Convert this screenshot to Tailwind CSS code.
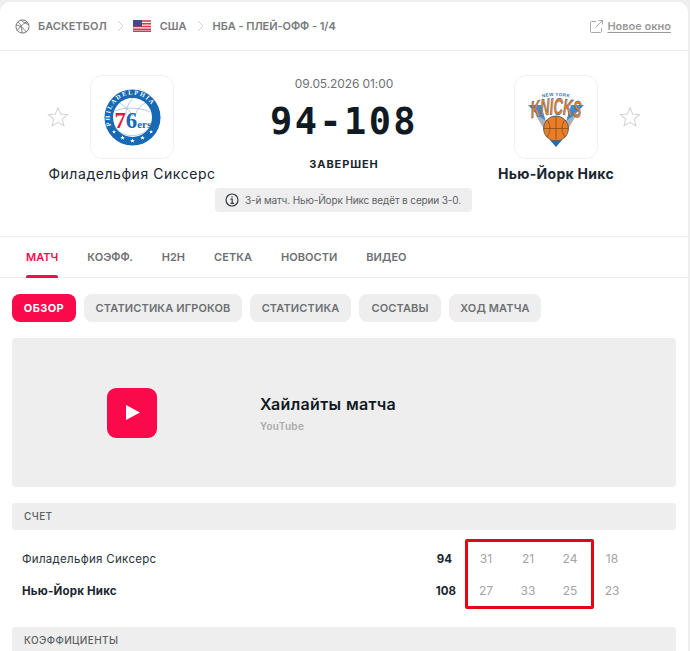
<!DOCTYPE html>
<html lang="ru">
<head>
  <meta charset="UTF-8" />
  <meta name="viewport" content="width=device-width, initial-scale=1.0" />
  <title>Филадельфия Сиксерс - Нью-Йорк Никс</title>
  <script src="https://cdn.jsdelivr.net/npm/@tailwindcss/browser@4"></script>
</head>
<body class="bg-[#eeeeee] font-['Inter','Noto_Sans',sans-serif] h-[651px] overflow-hidden">
  <div class="mt-[2px] mr-[2px] h-[649px] overflow-hidden rounded-t-[10px] bg-white">

    <!-- breadcrumbs -->
    <div class="flex h-[49px] items-center justify-between border-b border-[#ebebeb] pl-[15px] pr-[17px]">
      <div class="flex items-center text-[11px] font-semibold text-[#777a7d]">
        <svg class="h-[15px] w-[15px] shrink-0" viewBox="0 0 16 16" fill="none" stroke="#6f7275" stroke-width="1">
          <circle cx="8" cy="8" r="7" />
          <path d="M3 3c2.800 2.300 4.200 4.600 4.500 12M13 3C9.500 4 6 8 2 12.500M1.300 6.500c3 .3 8 3 10.700 7.500M6.500 1.200c2 2 5.500 4 8.300 4.800" />
        </svg>
        <span class="ml-[8px] tracking-[0.05px]">БАСКЕТБОЛ</span>
        <svg class="ml-[10px] h-[12px] w-[7px]" viewBox="0 0 7 12" fill="none" stroke="#d4d4d4" stroke-width="1"><path d="M1 1l5 5-5 5" /></svg>
        <svg class="ml-[9px] h-[12px] w-[18px]" viewBox="0 0 18 12">
          <rect width="18" height="12" fill="#f1f1f4" />
          <path d="M0 1h18M0 3.800h18M0 6.500h18M0 9.200h18M0 11.300h18" stroke="#d6394a" stroke-width="1.400" />
          <rect width="9" height="6.500" fill="#3d4d8c" />
        </svg>
        <span class="ml-[9px]">США</span>
        <svg class="ml-[10px] h-[12px] w-[7px]" viewBox="0 0 7 12" fill="none" stroke="#d4d4d4" stroke-width="1"><path d="M1 1l5 5-5 5" /></svg>
        <span class="ml-[9px] tracking-[-0.05px]">НБА - ПЛЕЙ-ОФФ - 1/4</span>
      </div>
      <div class="flex items-center text-[11px] font-semibold text-[#9a9a9a]">
        <svg class="h-[13px] w-[13px]" viewBox="0 0 13 13" fill="none" stroke="#a8a8a8" stroke-width="1">
          <path d="M6 1.500H1.500a1 1 0 0 0-1 1v9a1 1 0 0 0 1 1h9a1 1 0 0 0 1-1V8M5.500 7.500l7-7M8.500.5h4v4" />
        </svg>
        <span class="ml-[4px] underline underline-offset-2">Новое окно</span>
      </div>
    </div>

    <!-- match header -->
    <div class="flex h-[186px] border-b border-[#ebebeb] pt-[24px]">
      <div class="flex w-[264px] flex-col items-center">
        <div class="relative flex h-[84px] w-[84px] items-center justify-center rounded-[12px] border border-[#f0f0f0]">
          <svg class="absolute left-[-44px] top-[30px] h-[22px] w-[22px]" viewBox="0 0 22 22" fill="none" stroke="#d3d3d3" stroke-width="1.100"><path d="M11 1.800l2.700 6.300 6.800.6-5.200 4.500 1.600 6.700-5.900-3.600-5.900 3.600 1.600-6.700-5.200-4.500 6.800-.6z" /></svg>
          <svg class="h-[57px] w-[57px]" viewBox="0 0 60 60">
            <circle cx="30" cy="30" r="29.500" fill="#1669b5" />
            <circle cx="30" cy="30" r="20.500" fill="#ffffff" />
            <path d="M12 23c9-4 25-4 36 1M30 10c-5 6-7 12-7 18M17 15c6 4 11 9 14 14M43 15c-6 3-9 8-10 13" fill="none" stroke="#9fb9d6" stroke-width="0.800" />
            <path d="M12 40c-1 0 5 9 18 9s18-9 18-9" fill="none" stroke="#9fb9d6" stroke-width="0.800" />
            <path id="ring76" d="M8 39.500A24 24 0 1 1 52 39.500" fill="none" />
            <text font-family="'Liberation Serif',serif" font-size="6.600" font-weight="700" fill="#ffffff" letter-spacing="1.700"><textPath href="#ring76" startOffset="1">PHILADELPHIA</textPath></text>
            <path d="M30 52l.7 1.700h1.800l-1.400 1.100.5 1.800-1.600-1-1.600 1 .5-1.800-1.400-1.100h1.800zM19.500 49l.7 1.600h1.700l-1.300 1.100.5 1.700-1.600-1-1.500 1 .5-1.700-1.300-1.100h1.700zM40.500 49l.7 1.600h1.700l-1.300 1.100.5 1.700-1.600-1-1.500 1 .5-1.700-1.300-1.100h1.700zM10.500 43l.6 1.400h1.500l-1.200 1 .5 1.500-1.400-.9-1.300.9.400-1.500-1.100-1h1.500zM49.500 43l.6 1.400h1.500l-1.200 1 .5 1.500-1.400-.9-1.300.9.400-1.500-1.100-1h1.500z" fill="#ffffff" />
            <text x="11" y="41" font-family="'Liberation Serif',serif" font-size="24" font-weight="700"><tspan fill="#e01a3c">7</tspan><tspan fill="#1669b5">6</tspan><tspan fill="#1669b5" font-size="11.500">ers</tspan></text>
          </svg>
        </div>
        <div class="mt-[6px] whitespace-nowrap text-[14px] leading-[18px] tracking-[0.55px] text-[#1a2530]">Филадельфия Сиксерс</div>
      </div>

      <div class="flex w-[160px] flex-col items-center pt-[1px]">
        <div class="whitespace-nowrap text-[12px] leading-[15px] tracking-[-0.1px] text-[#6e7174]">09.05.2026 01:00</div>
        <div class="mt-[9px] whitespace-nowrap font-['DejaVu_Sans_Mono',monospace] text-[37px] leading-[44px] font-bold tracking-[2.400px] text-[#0f1a24]">94-108</div>
        <div class="mt-[13px] whitespace-nowrap text-[11px] leading-[14px] font-bold tracking-[0.9px] text-[#1a2530]">ЗАВЕРШЕН</div>
        <div class="ml-[-1px] mt-[17px] flex h-[24px] w-[257px] shrink-0 items-center rounded-[4px] bg-[#eeeeee] pl-[10px] text-[10px] tracking-[-0.13px] text-[#5d6063]">
          <svg class="h-[14px] w-[14px] shrink-0" viewBox="0 0 14 14" fill="none" stroke="#33383d" stroke-width="1.200"><circle cx="7" cy="7" r="6" /><path d="M5.500 6.200H7.200V10.300M5.500 10.300H9M7 3.300v1.300" /></svg>
          <span class="ml-[6px] whitespace-nowrap">3-й матч. Нью-Йорк Никс ведёт в серии 3-0.</span>
        </div>
      </div>

      <div class="flex w-[264px] flex-col items-center">
        <div class="relative flex h-[84px] w-[84px] items-center justify-center rounded-[12px] border border-[#f0f0f0]">
          <svg class="h-[60px] w-[60px]" viewBox="0 0 60 60">
            <path id="arcNy" d="M8 13Q30 5 52 13" fill="none" />
            <text font-family="'Liberation Sans',sans-serif" font-size="4.600" font-weight="700" fill="#2b78b8" letter-spacing="0.300" text-anchor="middle"><textPath href="#arcNy" startOffset="50%">NEW YORK</textPath></text>
            <path d="M2 18H15L21 38zM58 18H45L39 38z" fill="#3f8fd0" />
            <path d="M9 27l10 17 8-6zM51 27l-10 17-8-6z" fill="#a9b0b6" />
            <path d="M24 53h12l-6 7z" fill="#1d6bb0" />
            <g transform="translate(30 32) scale(1 1.800)">
              <path id="arcKnicks" d="M-32 1Q0 -6 32 1" fill="none" />
              <text font-family="'Liberation Sans',sans-serif" font-size="13" font-weight="700" font-style="italic" fill="#e87f28" stroke="#1d5d9b" stroke-width="0.300" text-anchor="middle"><textPath href="#arcKnicks" startOffset="50%">KNICKS</textPath></text>
            </g>
            <circle cx="30" cy="41.500" r="12.500" fill="#e87f28" stroke="#5a6269" stroke-width="1" />
            <path d="M17.500 41.500h25M30 29v25M21 33c4 5 4 12 0 17M39 33c-4 5-4 12 0 17" fill="none" stroke="#8a4a18" stroke-width="0.800" />
          </svg>
          <svg class="absolute right-[-44px] top-[30px] h-[22px] w-[22px]" viewBox="0 0 22 22" fill="none" stroke="#d3d3d3" stroke-width="1.100"><path d="M11 1.800l2.700 6.300 6.800.6-5.200 4.500 1.600 6.700-5.900-3.600-5.900 3.600 1.600-6.700-5.200-4.500 6.800-.6z" /></svg>
        </div>
        <div class="mt-[6px] whitespace-nowrap text-[14px] leading-[18px] font-bold tracking-[0.3px] text-[#1a2530]">Нью-Йорк Никс</div>
      </div>
    </div>

    <!-- tabs -->
    <div class="flex h-[41px] items-center gap-[29px] border-b border-[#ebebeb] pl-[26px] text-[11px] font-semibold tracking-[0.03px] text-[#6d7073]">
      <span class="relative flex h-full items-center text-[#fa0a4b]">МАТЧ<span class="absolute bottom-[-1px] left-0 right-0 h-[3px] rounded-t-[2px] bg-[#fa0a4b]"></span></span>
      <span>КОЭФФ.</span>
      <span>H2H</span>
      <span>СЕТКА</span>
      <span>НОВОСТИ</span>
      <span>ВИДЕО</span>
    </div>

    <div class="relative px-[12px] pt-[16px]">
      <!-- sub tabs -->
      <div class="flex gap-[8px] text-[11px] font-semibold tracking-[0.12px] text-[#6d7073]">
        <span class="flex h-[28px] w-[64px] items-center justify-center rounded-[8px] bg-[#fa0a4b] font-bold tracking-[0.4px] text-white">ОБЗОР</span>
        <span class="flex h-[28px] w-[158px] items-center justify-center rounded-[8px] bg-[#eeeeee]">СТАТИСТИКА ИГРОКОВ</span>
        <span class="flex h-[28px] w-[101px] items-center justify-center rounded-[8px] bg-[#eeeeee]">СТАТИСТИКА</span>
        <span class="flex h-[28px] w-[82px] items-center justify-center rounded-[8px] bg-[#eeeeee]">СОСТАВЫ</span>
        <span class="flex h-[28px] w-[92px] items-center justify-center rounded-[8px] bg-[#eeeeee]">ХОД МАТЧА</span>
      </div>

      <!-- video -->
      <div class="mt-[16px] flex h-[149px] items-center rounded-[4px] bg-[#eeeeee] pl-[95px]">
        <div class="flex h-[50px] w-[50px] items-center justify-center rounded-[9px] bg-[#fa0a4b]">
          <svg class="ml-[1px] h-[15px] w-[14px]" viewBox="0 0 14 15"><path d="M0 0l14 7.500L0 15z" fill="#ffffff" /></svg>
        </div>
        <div class="ml-[103px] mt-[2px]">
          <div class="text-[16px] leading-[20px] font-semibold tracking-[0.35px] text-[#0f1a24]">Хайлайты матча</div>
          <div class="mt-[5px] text-[10px] leading-[14px] font-semibold tracking-[0.3px] text-[#aaaaaa]">YouTube</div>
        </div>
      </div>

      <!-- score -->
      <div class="mt-[16px] flex h-[27px] w-[664px] items-center rounded-[3px] bg-[#eeeeee] pl-[12px] text-[10px] font-medium tracking-[0.4px] text-[#5d6063]">СЧЕТ</div>
      <div class="mt-[13px] w-[664px] leading-[16px]">
        <div class="flex h-[32px] items-center">
          <span class="ml-[10px] w-[399px] text-[11.500px] tracking-[0.3px] text-[#2a333b]">Филадельфия Сиксерс</span>
          <span class="w-[31px] text-right text-[11.500px] font-bold text-[#1a2530]">94</span>
          <span class="ml-[13px] flex text-[12px] text-[#a3a3a3]">
            <span class="w-[42px] text-center">31</span><span class="w-[42px] text-center">21</span><span class="w-[42px] text-center">24</span><span class="w-[42px] text-center">18</span>
          </span>
        </div>
        <div class="flex h-[32px] items-center">
          <span class="ml-[10px] w-[399px] text-[11.500px] font-bold tracking-[0.2px] text-[#1a2530]">Нью-Йорк Никс</span>
          <span class="w-[35px] text-right text-[11.500px] font-bold text-[#1a2530]">108</span>
          <span class="ml-[9px] flex text-[12px] text-[#a3a3a3]">
            <span class="w-[42px] text-center">27</span><span class="w-[42px] text-center">33</span><span class="w-[42px] text-center">25</span><span class="w-[42px] text-center">23</span>
          </span>
        </div>
      </div>
      <div class="mt-[20px] flex h-[27px] w-[664px] items-center rounded-[3px] bg-[#eeeeee] pl-[12px] text-[10px] font-medium tracking-[0.4px] text-[#5d6063]">КОЭФФИЦИЕНТЫ</div>

      <!-- highlight drawn over the period scores -->
      <div class="absolute left-[465px] top-[261px] h-[70px] w-[129px] rounded-[2px] border-[3px] border-[#e30613]"></div>
    </div>
  </div>
</body>
</html>
